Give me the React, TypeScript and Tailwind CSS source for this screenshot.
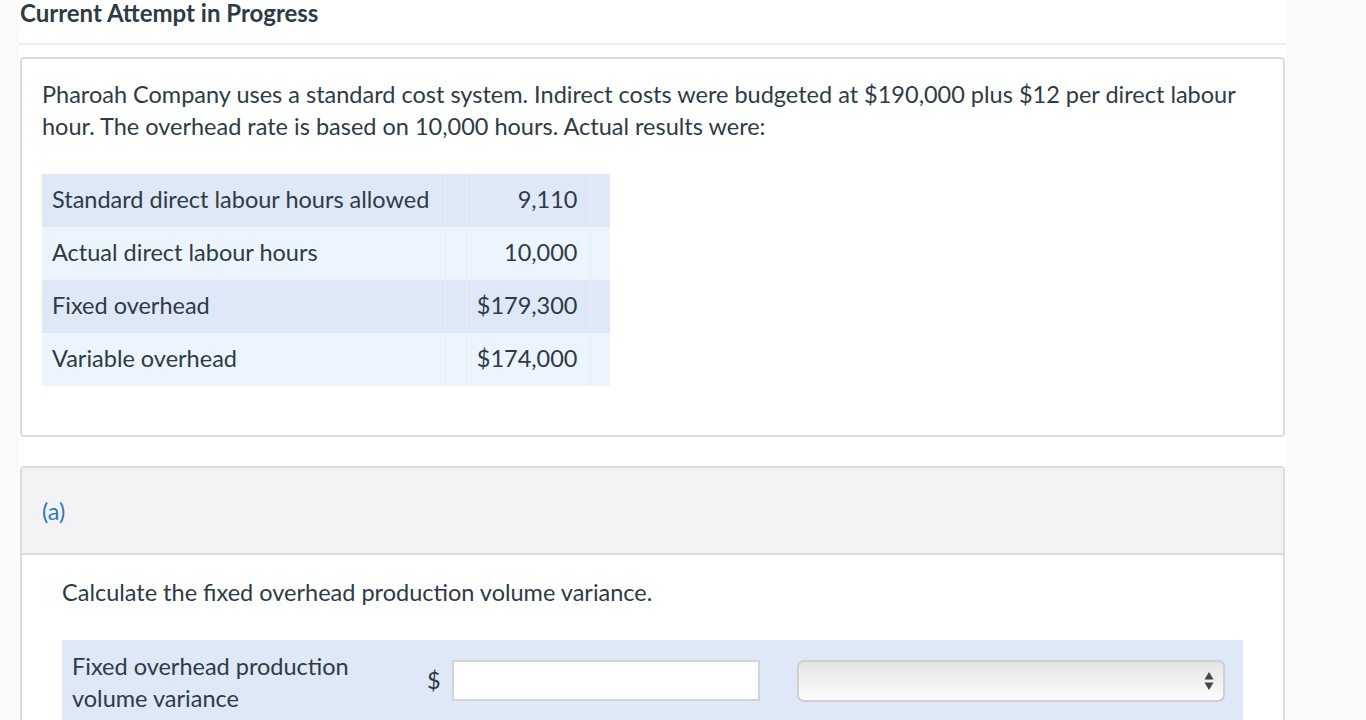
const rows = [
  { label: 'Standard direct labour hours allowed', value: '9,110' },
  { label: 'Actual direct labour hours', value: '10,000' },
  { label: 'Fixed overhead', value: '$179,300' },
  { label: 'Variable overhead', value: '$174,000' },
];

export default function App() {
  return (
    <div className="min-h-screen bg-[#fafafa] font-['Lato',sans-serif] text-[#2d3b45]">
      <div className="ml-[19px] w-[1267px] bg-white min-h-screen">
        {/* Attempt header */}
        <h2 className="pl-px text-[24px] font-bold leading-[26px] h-[43px]">Current Attempt in Progress</h2>
        <div className="h-[2px] bg-[#ececec]" />

        {/* Question stem */}
        <div className="ml-px mt-3 w-[1265px] rounded-[4px] border-2 border-[#dcdcdc] px-[20px] pt-[19px] pb-[49px]">
          <p className="text-[23.5px] leading-[32px]">
            Pharoah Company uses a standard cost system. Indirect costs were budgeted at $190,000 plus $12 per direct labour
            hour. The overhead rate is based on 10,000 hours. Actual results were:
          </p>
          <table className="mt-[32px] border-collapse text-[23.5px]">
            <tbody>
              {rows.map((r, i) => (
                <tr key={r.label} className={i % 2 === 0 ? 'bg-[#dfe8f6]' : 'bg-[#ecf4fe]'}>
                  <td className="h-[53px] w-[403px] pl-[10px] pr-2 pb-[1px] whitespace-nowrap border-r border-[#e6eef9]">{r.label}</td>
                  <td className="w-[21px] border-r border-[#e6eef9]" />
                  <td className="w-[124px] pr-[12px] pb-[1px] text-right border-r border-[#e6eef9]">{r.value}</td>
                  <td className="w-[20px]" />
                </tr>
              ))}
            </tbody>
          </table>
        </div>

        {/* Part (a) */}
        <div className="ml-px mt-[29px] w-[1265px] rounded-t-[4px] border-2 border-b-0 border-[#dcdcdc]">
          <div className="h-[87px] bg-[#f3f3f3] border-b-2 border-[#dcdcdc] pl-[20px] flex items-center">
            <span className="text-[23.5px] text-[#2b7abc] pt-[2px]">(a)</span>
          </div>
          <div className="px-[40px] pt-[21px] pb-6">
            <p className="text-[23.5px] leading-[32px]">Calculate the fixed overhead production volume variance.</p>
            <div className="mt-[32px] w-[1181px] bg-[#dfe8f6] flex">
              <div className="w-[357px] shrink-0 pl-[10px] pt-[10px] pb-[8px] text-[23.5px] leading-[32px]">
                Fixed overhead production volume variance
              </div>
              <div className="flex shrink-0 items-center pb-[1px]">
                <span className="ml-[8px] text-[23.5px] w-[14px]">$</span>
                <input
                  type="text"
                  className="ml-[11px] h-[41px] w-[308px] shrink-0 border-2 border-[#d4d4d4] bg-white outline-none"
                />
              </div>
              <div className="flex items-center pb-[1px] pl-[37px]">
                <div className="relative h-[42px] w-[428px] rounded-[7px] border-2 border-[#cfcfcf] bg-gradient-to-b from-[#e4e4e4] to-[#fdfdfd] shadow-[inset_0_-2px_2px_rgba(255,255,255,0.9)]">
                  <svg
                    className="absolute right-[9px] top-1/2 -translate-y-1/2"
                    width="10"
                    height="19"
                    viewBox="0 0 10 19"
                  >
                    <path d="M5 0.5 L9.5 8 L0.5 8 Z" fill="#444" />
                    <path d="M0.5 11 L9.5 11 L5 18.5 Z" fill="#444" />
                  </svg>
                </div>
              </div>
            </div>
          </div>
        </div>
      </div>
    </div>
  );
}
